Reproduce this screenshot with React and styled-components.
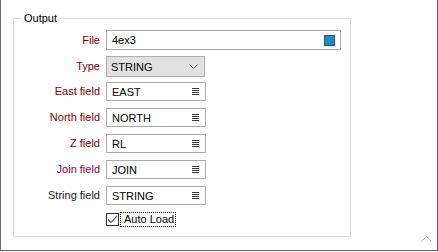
import React from "react";
import styled, { createGlobalStyle } from "styled-components";

const Global = createGlobalStyle`
  html, body {
    margin: 0;
    padding: 0;
    background: #fff;
  }
  body {
    font-family: "Liberation Sans", Arial, sans-serif;
    font-size: 11px;
    color: #000;
  }
`;

const Frame = styled.div`
  position: relative;
  width: 438px;
  height: 251px;
  box-sizing: border-box;
  border-left: 1px solid #6e6e6e;
  border-right: 1px solid #5a5a5a;
  border-bottom: 1px solid #646464;
  padding-top: 12px;
  padding-left: 12px;
`;

const Group = styled.fieldset`
  margin: 0;
  width: 338px;
  height: 225px;
  box-sizing: border-box;
  border: 1px solid #dcdcdc;
  padding: 5px 0 0 7px;
  min-width: 0;
`;

const Legend = styled.legend`
  padding: 0 3px;
  line-height: 13px;
  font-size: 11px;
  color: #000;
`;

const Form = styled.div`
  display: flex;
  flex-direction: column;
`;

const Row = styled.div`
  display: flex;
  align-items: flex-start;
  height: 26px;
`;

const Label = styled.div`
  width: 79px;
  flex: none;
  text-align: right;
  color: ${(p) => p.$color || "#800000"};
  line-height: ${(p) => p.$h || 19}px;
  margin-right: 6px;
  white-space: nowrap;
`;

const Box = styled.div`
  display: flex;
  align-items: center;
  box-sizing: border-box;
  width: ${(p) => p.$w}px;
  height: ${(p) => p.$h || 19}px;
  border: 1px solid ${(p) => (p.$combo ? "#adadad" : "#ababab")};
  background: ${(p) => (p.$combo ? "#e1e1e1" : "#fff")};
  padding-left: ${(p) => p.$pl || 5}px;
  padding-right: ${(p) => p.$pr || 6}px;
`;

const Value = styled.span`
  flex: 1;
  white-space: nowrap;
  color: #000;
`;

const ColorSwatch = styled.span`
  width: 11px;
  height: 11px;
  box-sizing: border-box;
  background: #2189d0;
  border: 1px solid #3c4f63;
`;

const CheckRow = styled.div`
  display: flex;
  align-items: center;
  margin-left: 85px;
  margin-top: 1px;
`;

const CheckBox = styled.span`
  width: 13px;
  height: 13px;
  box-sizing: border-box;
  border: 1px solid #333;
  background: #fff;
  display: flex;
  align-items: center;
  justify-content: center;
`;

const CheckText = styled.span`
  margin-left: 2px;
  padding: 0 1px 0 3px;
  line-height: 13px;
  outline: 1px dotted #000;
  outline-offset: 0;
`;

const Grip = styled.svg`
  position: absolute;
  right: 5px;
  bottom: 8px;
`;

const ListIcon = () => (
  <svg width="7" height="7" viewBox="0 0 7 7">
    <path d="M0 0.5H7M0 2.5H7M0 4.5H7M0 6.5H7" stroke="#3a3a3a" strokeWidth="1" />
  </svg>
);

const Chevron = () => (
  <svg width="9" height="5" viewBox="0 0 9 5">
    <path d="M0.5 0.5L4.5 4.5L8.5 0.5" fill="none" stroke="#606060" strokeWidth="1" />
  </svg>
);

const Check = () => (
  <svg width="11" height="9" viewBox="0 0 11 9">
    <path d="M1 4.5L4 7.5L10 1" fill="none" stroke="#6b6b6b" strokeWidth="1.2" />
  </svg>
);

const fields = [
  { label: "East field", value: "EAST" },
  { label: "North field", value: "NORTH" },
  { label: "Z field", value: "RL" },
  { label: "Join field", value: "JOIN", color: "#7d0048" },
  { label: "String field", value: "STRING", color: "#1a1a1a" },
];

export default function App() {
  return (
    <>
      <Global />
      <Frame>
        <Group>
          <Legend>Output</Legend>
          <Form>
            <Row>
              <Label $h={20}>File</Label>
              <Box $w={235} $h={20} $pr={5}>
                <Value>4ex3</Value>
                <ColorSwatch />
              </Box>
            </Row>
            <Row>
              <Label $h={21}>Type</Label>
              <Box $w={99} $h={21} $combo $pl={4} $pr={6}>
                <Value>STRING</Value>
                <Chevron />
              </Box>
            </Row>
            {fields.map((f) => (
              <Row key={f.label}>
                <Label $color={f.color}>{f.label}</Label>
                <Box $w={100}>
                  <Value>{f.value}</Value>
                  <ListIcon />
                </Box>
              </Row>
            ))}
            <CheckRow>
              <CheckBox>
                <Check />
              </CheckBox>
              <CheckText>Auto Load</CheckText>
            </CheckRow>
          </Form>
        </Group>
        <Grip width="11" height="6" viewBox="0 0 11 6">
          <path d="M0.5 5.5L5.5 0.5L10.5 5.5" fill="none" stroke="#707070" strokeWidth="1" strokeDasharray="1 1" />
        </Grip>
      </Frame>
    </>
  );
}
